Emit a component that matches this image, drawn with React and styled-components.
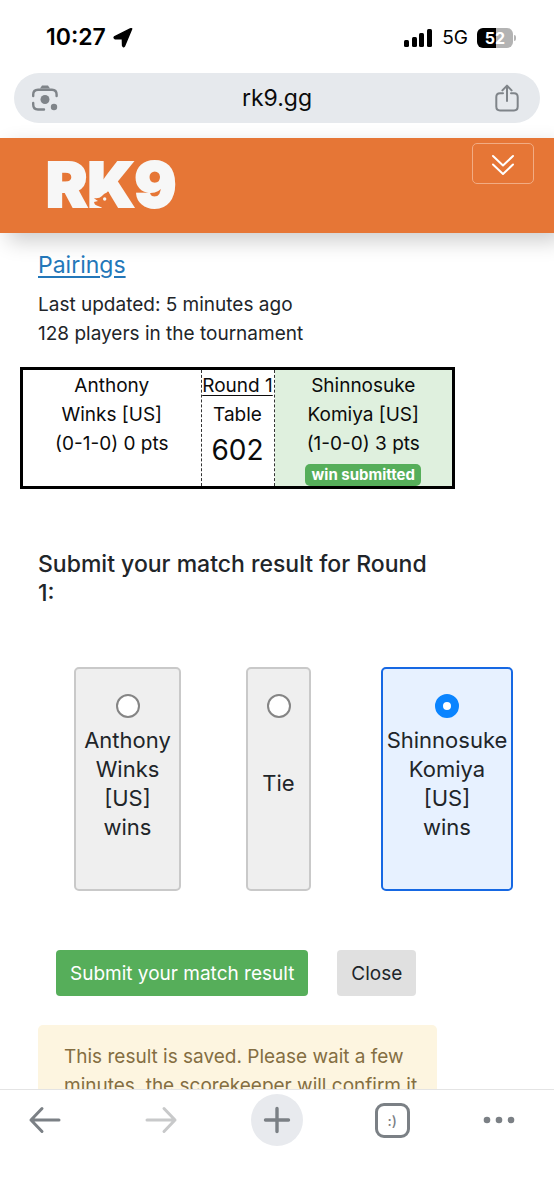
import React, { useState } from "react";
import styled, { createGlobalStyle } from "styled-components";

const GlobalStyle = createGlobalStyle`
  * { box-sizing: border-box; }
  body { margin: 0; background: #fff; }
  body, button, input { font-family: Inter, "Liberation Sans", sans-serif; }
  button { border: 0; padding: 0; background: none; color: inherit; cursor: pointer; }
`;

const Screen = styled.div`
  display: flex;
  flex-direction: column;
  height: 100vh;
  color: #212529;
  font-size: 19px;
  line-height: 29px;
`;

const StatusBar = styled.div`
  display: flex;
  flex: none;
  align-items: center;
  justify-content: space-between;
  height: 73px;
  padding: 2px 38px 0 46px;
  color: #000;
`;

const StatusGroup = styled.div`
  display: flex;
  align-items: center;
  gap: ${(p) => p.$gap}px;
`;

const Clock = styled.span`
  font-size: 23px;
  font-weight: 600;
`;

const Battery = styled.span`
  display: flex;
  align-items: center;
  gap: 1px;
  &::after {
    content: "";
    width: 2px;
    height: 6px;
    border-radius: 0 2px 2px 0;
    background: #b5b5b5;
  }
`;

const BatteryLevel = styled.span`
  width: 36px;
  border-radius: 6px;
  background: linear-gradient(90deg, #000 52%, #b3b3b3 52%);
  color: #fff;
  font-size: 16px;
  font-weight: 700;
  line-height: 20px;
  text-align: center;
`;

const AddressBar = styled.div`
  display: flex;
  flex: none;
  align-items: center;
  justify-content: space-between;
  height: 50px;
  margin: 0 14px 15px;
  padding: 0 20px 0 16px;
  border-radius: 25px;
  background: #e6e9ed;
`;

const Address = styled.button`
  flex: 1;
  color: #0b0b0b;
  font-size: 23px;
  line-height: 29px;
`;

const IconButton = styled.button`
  display: flex;
  align-items: center;
  justify-content: center;
  color: #7f8489;
`;

const SiteHeader = styled.header`
  display: flex;
  flex: none;
  align-items: flex-start;
  justify-content: space-between;
  height: 95px;
  padding: 5px 20px 0 46px;
  background: #e67636;
  box-shadow: 8px 8px 20px rgba(0, 0, 0, 0.2);
`;

const Logo = styled.a`
  position: relative;
  margin-top: 10px;
  color: #f7f7f7;
  font-size: 62px;
  font-weight: 900;
  line-height: 64px;
  text-decoration: none;
  -webkit-text-stroke: 2px #f7f7f7;
`;

const LogoDog = styled.svg`
  position: absolute;
  left: 47px;
  bottom: 8px;
`;

const MenuToggle = styled.button`
  display: flex;
  align-items: center;
  justify-content: center;
  width: 62px;
  height: 41px;
  border: 1px solid #f2ac83;
  border-radius: 5px;
  color: #fff;
`;

const Page = styled.main`
  flex: 1;
  min-height: 0;
  overflow: hidden;
  padding: 18px 117px 0 38px;
`;

const PairingsLink = styled.a`
  display: block;
  margin-bottom: 10px;
  color: #2377b9;
  font-size: 23px;
  text-underline-offset: 3px;
  text-decoration-thickness: 2px;
`;

const Info = styled.p`
  margin: 0;
`;

const Match = styled.section`
  display: grid;
  grid-template-columns: 1fr 74px 1fr;
  height: 122px;
  margin: 19px -18px 61px;
  border: 3px solid #000;
  color: #0b0b0b;
  text-align: center;
`;

const Player = styled.div`
  padding: 1px 24px 0;
  background: ${(p) => (p.$winner ? "#dff0de" : "transparent")};
`;

const TableInfo = styled.div`
  display: flex;
  flex-direction: column;
  align-items: center;
  padding-top: 1px;
  border: dashed #333;
  border-width: 0 1px;
  white-space: nowrap;
`;

const RoundLabel = styled.span`
  font-size: 19px;
  text-decoration: underline;
  text-underline-offset: 3px;
`;

const TableNumber = styled.span`
  font-size: 28px;
  line-height: 43px;
`;

const ResultBadge = styled.span`
  display: block;
  width: 116px;
  margin: 6px auto 0;
  border-radius: 5px;
  background: #56ae5a;
  color: #fff;
  font-size: 15px;
  font-weight: 700;
  line-height: 22px;
  white-space: nowrap;
`;

const FormTitle = styled.h1`
  margin: 0 0 59px;
  font-size: 23px;
  font-weight: 500;
  line-height: 29px;
`;

const Choices = styled.fieldset`
  display: grid;
  grid-template-columns: 172fr 135fr 132fr;
  margin: 0 -76px 59px 36px;
  padding: 0;
  border: 0;
`;

const Choice = styled.label`
  display: flex;
  flex-direction: column;
  align-items: center;
  justify-self: start;
  width: ${(p) => p.$width}px;
  height: 224px;
  padding: 25px 0 46px;
  border: 2px solid ${(p) => (p.$selected ? "#1668e3" : "#c9c9c9")};
  border-radius: 5px;
  background: ${(p) => (p.$selected ? "#e7f1ff" : "#efefef")};
  font-size: 22px;
  text-align: center;
`;

const ChoiceText = styled.span`
  display: flex;
  flex: 1;
  flex-direction: column;
  justify-content: center;
  padding-top: 6px;
`;

const Radio = styled.input`
  flex: none;
  width: 24px;
  height: 24px;
  margin: 0;
  border: 2px solid #858585;
  border-radius: 50%;
  background: #fff;
  appearance: none;
  &:checked {
    border: 8px solid #0a84ff;
  }
`;

const Actions = styled.div`
  display: flex;
  gap: 29px;
  margin: 0 0 29px 18px;
`;

const ActionButton = styled.button`
  height: 46px;
  padding: 0 14px;
  border-radius: 4px;
  background: ${(p) => (p.$primary ? "#56ae5a" : "#e0e0e0")};
  color: ${(p) => (p.$primary ? "#fff" : "#212529")};
  font-size: 19px;
  white-space: nowrap;
`;

const Notice = styled.div`
  padding: 17px 8px 17px 26px;
  border-radius: 5px;
  background: #fdf5e0;
  color: #846e42;
`;

const BrowserBar = styled.nav`
  display: flex;
  flex: none;
  align-items: flex-start;
  justify-content: space-between;
  height: 111px;
  padding: 4px 38px 0 19px;
  border-top: 1px solid #e4e4e4;
  background: #fff;
`;

const BarButton = styled(IconButton)`
  width: ${(p) => p.$width || 52}px;
  height: 52px;
  border-radius: 50%;
  background: ${(p) => (p.$filled ? "#e8eaee" : "transparent")};
  color: ${(p) => (p.$muted ? "#c8c9ca" : "#7b8085")};
`;

const TabCount = styled.span`
  width: 35px;
  height: 35px;
  border: 3px solid currentColor;
  border-radius: 9px;
  font-size: 14px;
  font-weight: 500;
  line-height: 29px;
`;

const stroke = {
  fill: "none",
  stroke: "currentColor",
  strokeLinecap: "round",
  strokeLinejoin: "round",
};

const choices = [
  { id: "p1", width: 107, lines: ["Anthony", "Winks", "[US]", "wins"] },
  { id: "tie", width: 65, lines: ["Tie"] },
  { id: "p2", width: 132, lines: ["Shinnosuke", "Komiya", "[US]", "wins"] },
];

export default function App() {
  const [selected, setSelected] = useState("p2");

  return (
    <Screen>
      <GlobalStyle />
      <StatusBar>
        <StatusGroup $gap={7}>
          <Clock>10:27</Clock>
          <svg width="20" height="20" viewBox="0 0 20 20" aria-hidden="true">
            <path d="M18.6 1 L11.500 18 Q10.200 19.600 9.600 17.600 L9.400 10.700 H2 Q.4 9.700 1.800 8.600 L17.200 .9 Q18.800 .3 18.600 1Z" fill="#000" stroke="#000" strokeWidth="1.500" strokeLinejoin="round" />
          </svg>
        </StatusGroup>
        <StatusGroup $gap={9}>
          <svg width="29" height="20" viewBox="0 0 29 20" aria-hidden="true">
            <rect x="0" y="12" width="5" height="7" rx="1.5" />
            <rect x="8" y="9" width="5" height="10" rx="1.5" />
            <rect x="15" y="5" width="5" height="14" rx="1.5" />
            <rect x="23" y="1" width="5" height="18" rx="1.5" />
          </svg>
          <span>5G</span>
          <Battery>
            <BatteryLevel>52</BatteryLevel>
          </Battery>
        </StatusGroup>
      </StatusBar>

      <AddressBar>
        <IconButton aria-label="Search with camera">
          <svg width="30" height="28" viewBox="0 0 30 28" {...stroke} strokeWidth="2.4">
            <path d="M3.2 12V10.5Q3.2 5.7 8 5.7H22Q26.6 5.7 26.6 10.5V12M3.2 19V20.5Q3.2 25.5 8 25.5H14" />
            <path d="M10 4.5 12 1.5H18L20 4.5Z" fill="currentColor" stroke="none" />
            <circle cx="15" cy="15.5" r="4.5" fill="currentColor" stroke="none" />
            <circle cx="24" cy="23" r="3.2" fill="currentColor" stroke="none" />
          </svg>
        </IconButton>
        <Address>rk9.gg</Address>
        <IconButton aria-label="Share">
          <svg width="26" height="28" viewBox="0 0 26 28" {...stroke} strokeWidth="2">
            <path d="M9 9.3H6Q2.3 9.3 2.3 13V22.5Q2.3 26.4 6 26.4H20Q23.7 26.4 23.7 22.5V13Q23.7 9.3 20 9.3H17" />
            <path d="M13 17V1.8M8.4 6.4 13 1.6 17.6 6.4" />
          </svg>
        </IconButton>
      </AddressBar>

      <SiteHeader>
        <Logo href="#home">
          RK9
          <LogoDog width="17" height="18" viewBox="0 0 17 18" aria-hidden="true">
            <path d="M1 7Q6 8 9 5Q11 2 16 1L17 18H10Q9 16 5 15Q1 14 1 10.500Z" fill="#e67636" />
            <path d="M1 7Q3 9 5 10L1 11Z" fill="#f7f7f7" />
            <circle cx="11.700" cy="8" r="1.700" fill="#f7f7f7" />
          </LogoDog>
        </Logo>
        <MenuToggle aria-label="Toggle navigation">
          <svg width="24" height="24" viewBox="0 0 24 24" {...stroke} strokeWidth="2">
            <path d="M2 4 12 13.500 22 4M2 12.500 12 22 22 12.500" />
          </svg>
        </MenuToggle>
      </SiteHeader>

      <Page>
        <PairingsLink href="#pairings">Pairings</PairingsLink>
        <Info>Last updated: 5 minutes ago</Info>
        <Info>128 players in the tournament</Info>

        <Match>
          <Player>
            Anthony Winks&nbsp;[US]
            <br />
            (0-1-0) 0 pts
          </Player>
          <TableInfo>
            <RoundLabel>Round 1</RoundLabel>
            <span>Table</span>
            <TableNumber>602</TableNumber>
          </TableInfo>
          <Player $winner>
            Shinnosuke Komiya&nbsp;[US]
            <br />
            (1-0-0) 3 pts
            <ResultBadge>win submitted</ResultBadge>
          </Player>
        </Match>

        <FormTitle>Submit your match result for Round 1:</FormTitle>
        <Choices aria-label="Match result">
          {choices.map(({ id, width, lines }) => (
            <Choice key={id} htmlFor={id} $width={width} $selected={selected === id}>
              <Radio
                type="radio"
                id={id}
                name="result"
                checked={selected === id}
                onChange={() => setSelected(id)}
              />
              <ChoiceText>
                {lines.map((line) => (
                  <span key={line}>{line}</span>
                ))}
              </ChoiceText>
            </Choice>
          ))}
        </Choices>

        <Actions>
          <ActionButton $primary>Submit your match result</ActionButton>
          <ActionButton>Close</ActionButton>
        </Actions>

        <Notice>This result is saved. Please wait a few minutes, the scorekeeper will confirm it</Notice>
      </Page>

      <BrowserBar>
        <BarButton aria-label="Back">
          <svg width="34" height="28" viewBox="0 0 34 28" {...stroke} strokeWidth="3">
            <path d="M31 14H3M14 2.500 3 14 14 25.500" />
          </svg>
        </BarButton>
        <BarButton aria-label="Forward" $muted>
          <svg width="34" height="28" viewBox="0 0 34 28" {...stroke} strokeWidth="3">
            <path d="M3 14H31M20 2.500 31 14 20 25.500" />
          </svg>
        </BarButton>
        <BarButton aria-label="New tab" $filled>
          <svg width="28" height="28" viewBox="0 0 28 28" {...stroke} strokeWidth="3.400">
            <path d="M14 2.500V25.500M2.500 14H25.500" />
          </svg>
        </BarButton>
        <BarButton aria-label="Tabs">
          <TabCount>:)</TabCount>
        </BarButton>
        <BarButton aria-label="More" $width={34}>
          <svg width="34" height="8" viewBox="0 0 34 8" fill="currentColor">
            <circle cx="5" cy="4" r="3.300" />
            <circle cx="17" cy="4" r="3.300" />
            <circle cx="29" cy="4" r="3.300" />
          </svg>
        </BarButton>
      </BrowserBar>
    </Screen>
  );
}
